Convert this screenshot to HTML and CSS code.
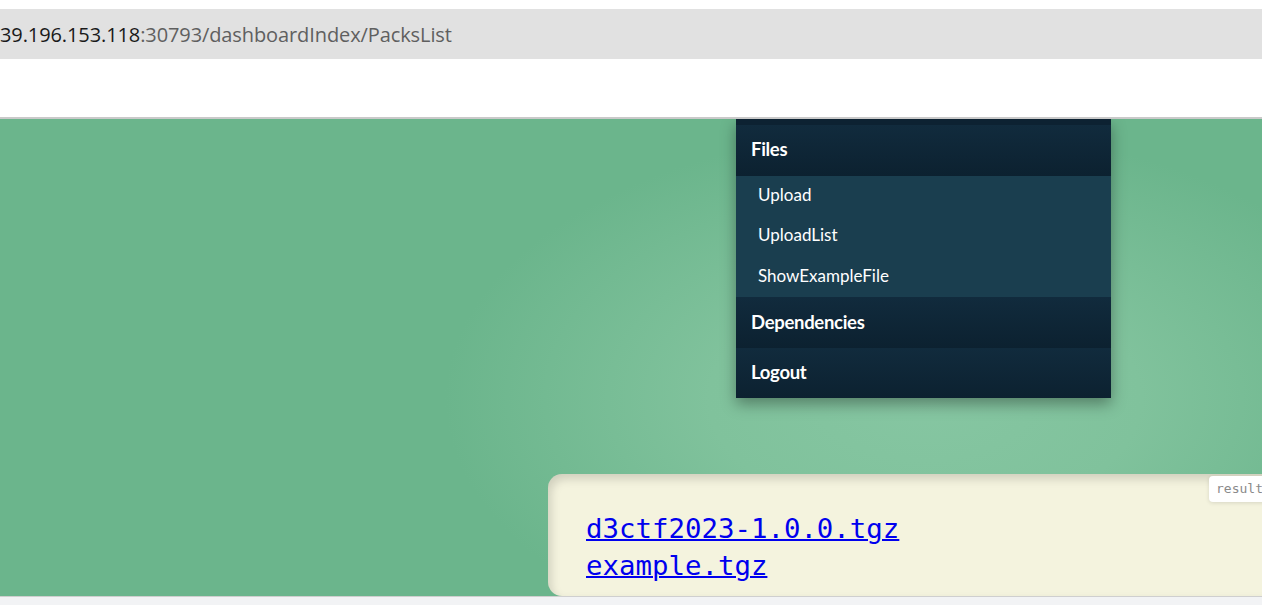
FILE: index.html
```html
<!DOCTYPE html>
<html>
<head>
<meta charset="utf-8">
<link rel="stylesheet" href="styles.css">
</head>
<body>
<div class="topgap"></div>
<div class="addr"><span class="host">39.196.153.118</span><span class="path">:30793/dashboardIndex/PacksList</span></div>
<div class="blank"></div>
<div class="main">
  <nav class="menu">
    <div class="strip"></div>
    <div class="head">Files</div>
    <div class="sub">
      <div class="item">Upload</div>
      <div class="item">UploadList</div>
      <div class="item">ShowExampleFile</div>
    </div>
    <div class="head">Dependencies</div>
    <div class="head">Logout</div>
  </nav>
  <div class="card">
    <span class="tag">result</span>
    <a href="#" class="file">d3ctf2023-1.0.0.tgz</a>
    <a href="#" class="file">example.tgz</a>
  </div>
</div>
<div class="foot"></div>
</body>
</html>
```

FILE: styles.css
```css
html, body {
  margin: 0;
  padding: 0;
  background: #ffffff;
  overflow: hidden;
  width: 1262px;
  height: 605px;
}
.topgap { height: 9px; }
.addr {
  height: 50px;
  background: #e1e1e1;
  display: flex;
  align-items: center;
  font-family: "Open Sans", "Noto Sans", sans-serif;
  font-size: 20px;
  letter-spacing: -0.1px;
  white-space: nowrap;
}
.host { color: #1a1a1a; }
.path { color: #5f5f5f; }
.blank {
  height: 58px;
  border-bottom: 2px solid #c9c9c9;
}
.main {
  height: 477px;
  background: radial-gradient(ellipse 480px 270px at 925px 280px, #86c6a2 0%, #80c29c 45%, #6bb58c 100%);
  background-color: #6bb58c;
  display: flex;
  flex-direction: column;
  overflow: hidden;
}
.menu {
  margin-left: 736px;
  width: 375px;
  box-shadow: 0 6px 14px rgba(0, 0, 0, 0.35);
  font-family: "Lato", "Noto Sans", sans-serif;
  color: #ffffff;
}
.strip { height: 6px; background: #0d2232; }
.head {
  height: 50.5px;
  display: flex;
  align-items: center;
  padding-left: 15px;
  padding-bottom: 2px;
  box-sizing: border-box;
  font-weight: 700;
  font-size: 18.5px;
  letter-spacing: -0.3px;
  background: linear-gradient(#112b3d, #0c2130);
}
.sub {
  background: #1a3e4f;
}
.item {
  height: 40.6px;
  display: flex;
  align-items: center;
  padding-left: 22px;
  padding-bottom: 3px;
  box-sizing: border-box;
  font-size: 17px;
}
.card {
  margin-top: 76px;
  margin-left: 548px;
  width: 800px;
  height: 122px;
  border-radius: 14px 0 0 14px;
  background: #f4f3de;
  box-shadow: inset 3px 5px 10px rgba(0, 0, 0, 0.15);
  position: relative;
  display: flex;
  flex-direction: column;
  padding: 36px 0 0 38px;
  box-sizing: border-box;
}
.tag {
  position: absolute;
  left: 661px;
  top: 2px;
  background: #ffffff;
  border-radius: 4px;
  box-shadow: 0 1px 4px rgba(0, 0, 0, 0.12);
  padding: 5px 7px 6px;
  font-family: "DejaVu Sans Mono", monospace;
  font-size: 13px;
  color: #8a8a8a;
}
.file {
  font-family: "DejaVu Sans Mono", monospace;
  font-size: 27.4px;
  line-height: 37px;
  color: #0000ee;
  align-self: flex-start;
  text-decoration-thickness: 2px;
}
.foot {
  height: 8px;
  border-top: 1px solid #cfcfcf;
  background: #f2f3f5;
}
```
